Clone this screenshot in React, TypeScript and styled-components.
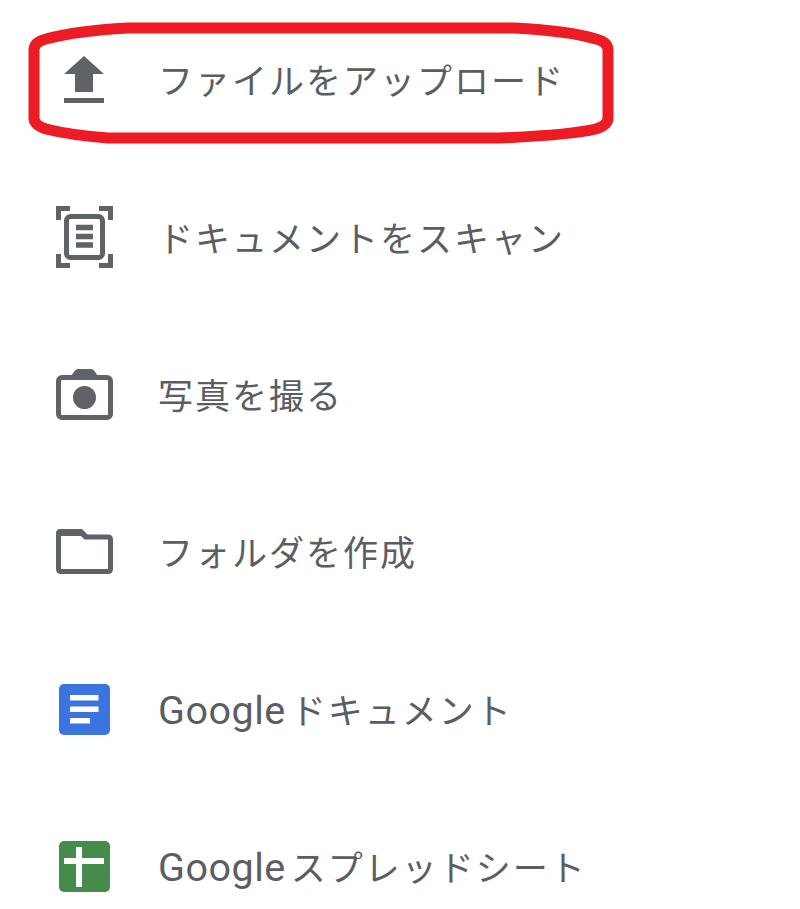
import React from 'react';
import styled, { createGlobalStyle } from 'styled-components';

const GlobalStyle = createGlobalStyle`
    html, body {
        margin: 0;
        padding: 0;
        background: #fff;
    }
`;

const Page = styled.div`
    position: relative;
    width: 800px;
    height: 909px;
    overflow: hidden;
    background: #fff;
`;

const MenuList = styled.ul`
    list-style: none;
    margin: 0;
    padding: 1px 0 0 55px;
    display: flex;
    flex-direction: column;
`;

const MenuRow = styled.li`
    display: flex;
    align-items: center;
    height: 157.4px;
`;

const IconCell = styled.div`
    width: 58px;
    margin-right: 45px;
    display: flex;
    align-items: center;
    justify-content: center;
    flex-shrink: 0;
`;

const Label = styled.span`
    font-family: "Noto Sans CJK JP", "Liberation Sans", sans-serif;
    font-size: 35px;
    font-weight: 400;
    letter-spacing: 2px;
    color: #5a5e63;
    white-space: nowrap;
    padding-bottom: 2px;
`;

const Brand = styled.span`
    font-family: Roboto, "Liberation Sans", sans-serif;
    font-size: 39.5px;
    letter-spacing: 0.5px;
    margin-right: 5px;
`;

const Highlight = styled.svg`
    position: absolute;
    left: 0;
    top: 0;
    pointer-events: none;
`;

const grey = '#5f6368';

const UploadIcon = () => (
    <svg width="40" height="47" viewBox="0 0 40 47">
        <path d="M20 0 L40 18 H29 V36 H11 V18 H0 Z" fill={grey} />
        <rect x="0" y="42" width="40" height="5" fill={grey} />
    </svg>
);

const ScanIcon = () => (
    <svg width="57" height="62" viewBox="0 0 57 62" fill="none">
        <path d="M14 2.5 H2.5 V14 M43 2.5 H54.5 V14 M14 59.5 H2.5 V48 M43 59.5 H54.5 V48" stroke={grey} strokeWidth="5" />
        <rect x="10.5" y="10.5" width="36" height="41" rx="4" stroke={grey} strokeWidth="5" />
        <path d="M20 21.5 H37 M20 30.5 H37 M20 39 H37" stroke={grey} strokeWidth="5.5" />
    </svg>
);

const CameraIcon = () => (
    <svg width="57" height="51" viewBox="0 0 57 51" fill="none">
        <path d="M15 7 L19 1.5 Q20 0 22 0 H35 Q37 0 38 1.5 L42 7 Z" fill={grey} />
        <rect x="2.5" y="8.5" width="52" height="40" rx="3.5" stroke={grey} strokeWidth="5" />
        <circle cx="28.5" cy="28.5" r="11.5" fill={grey} />
    </svg>
);

const FolderIcon = () => (
    <svg width="57" height="45" viewBox="0 0 57 45" fill="none">
        <path d="M5 2.5 H24 L29.5 8 H52 Q54.5 8 54.5 10.5 V40 Q54.5 42.5 52 42.5 H5 Q2.5 42.5 2.5 40 V5 Q2.5 2.5 5 2.5 Z" stroke={grey} strokeWidth="5" />
        <path d="M5 0 H24 Q26 0 27 1 L33 7 H0 V5 Q0 0 5 0 Z" fill={grey} />
    </svg>
);

const DocsIcon = () => (
    <svg width="51" height="51" viewBox="0 0 51 51">
        <rect width="51" height="51" rx="5" fill="#3b73e0" />
        <path d="M11 11 H39.5 V16.5 H11 Z M11 22.5 H39.5 V28 H11 Z M11 34 H31 V39.5 H11 Z" fill="#fff" />
    </svg>
);

const SheetsIcon = () => (
    <svg width="51" height="51" viewBox="0 0 51 51">
        <rect width="51" height="51" rx="5" fill="#458b49" />
        <path d="M17 6 H23 V17 H45 V23 H23 V46 H17 V23 H5 V17 H17 Z" fill="#fff" />
    </svg>
);

export default function App() {
    return (
        <Page>
            <GlobalStyle />
            <MenuList>
                <MenuRow>
                    <IconCell><UploadIcon /></IconCell>
                    <Label>ファイルをアップロード</Label>
                </MenuRow>
                <MenuRow>
                    <IconCell><ScanIcon /></IconCell>
                    <Label>ドキュメントをスキャン</Label>
                </MenuRow>
                <MenuRow>
                    <IconCell><CameraIcon /></IconCell>
                    <Label>写真を撮る</Label>
                </MenuRow>
                <MenuRow>
                    <IconCell><FolderIcon /></IconCell>
                    <Label>フォルダを作成</Label>
                </MenuRow>
                <MenuRow>
                    <IconCell><DocsIcon /></IconCell>
                    <Label><Brand>Google</Brand>ドキュメント</Label>
                </MenuRow>
                <MenuRow>
                    <IconCell><SheetsIcon /></IconCell>
                    <Label><Brand>Google</Brand>スプレッドシート</Label>
                </MenuRow>
            </MenuList>
            <Highlight width="800" height="160" viewBox="0 0 800 160" fill="none">
                <path
                    d="M128 28 Q75 31 46 39 Q34 42 34 50 V118 Q34 125 46 129 Q70 135 108 138 H500 Q570 135 596 129 Q608 125 608 118 V50 Q608 42 596 39 Q570 31 514 28 Z"
                    stroke="#ed1c24"
                    strokeWidth="11"
                    strokeLinejoin="round"
                />
            </Highlight>
        </Page>
    );
}
